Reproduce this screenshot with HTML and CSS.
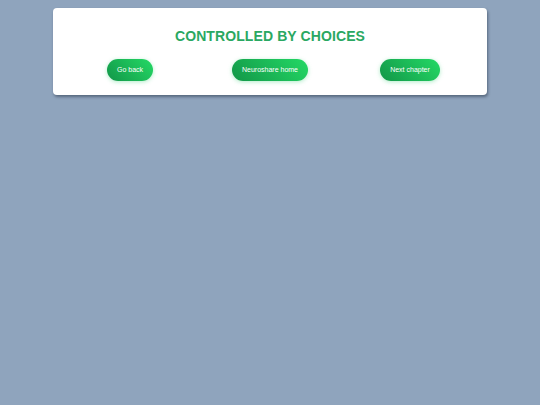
FILE: index.html
```html
<!DOCTYPE html>
<html lang="en">
<head>
    <meta charset="UTF-8">
    <meta name="viewport" content="width=device-width, initial-scale=1.0">
    <title>Controlled by Choices</title>
    <link rel="stylesheet" href="styles.css">
</head>
<body>

    <!-- 章节导航 -->
    <div class="card">
        <h1 class="title">CONTROLLED BY CHOICES</h1>
        <div class="nav">
            <div class="nav-cell"><a class="nav-btn" href="#">Go back</a></div>
            <div class="nav-cell"><a class="nav-btn" href="#">Neuroshare home</a></div>
            <div class="nav-cell"><a class="nav-btn" href="#">Next chapter</a></div>
        </div>
    </div>

</body>
</html>
```

FILE: styles.css
```css
/* 基础样式 */
body, html {
    margin: 0;
    padding: 0;
}
body {
    font-family: "Liberation Sans", Arial, sans-serif;
    background-color: #8fa4bd;
    padding-top: 8px;
    min-height: 100vh;
    box-sizing: border-box;
}
.card {
    width: 434px;
    margin: 0 auto;
    box-sizing: border-box;
    padding: 20px 7px 14px;
    background-color: #fff;
    border-radius: 4px;
    box-shadow: 1px 2px 3px rgba(20, 30, 50, 0.45);
}
/* 标题样式 */
.title {
    margin: 0 0 15px;
    font-size: 14px;
    line-height: 16px;
    font-weight: 700;
    letter-spacing: 0.1px;
    text-align: center;
    color: #2aa862;
}
.nav {
    display: grid;
    grid-template-columns: repeat(3, 1fr);
    justify-items: center;
}
.nav-btn {
    display: block;
    padding: 7px 10px;
    font-size: 7px;
    line-height: 8px;
    color: #fff;
    text-decoration: none;
    border-radius: 12px;
    background: linear-gradient(45deg, #129648, #24d965);
    box-shadow: 0 1px 4px rgba(30, 200, 100, 0.35);
}
```
